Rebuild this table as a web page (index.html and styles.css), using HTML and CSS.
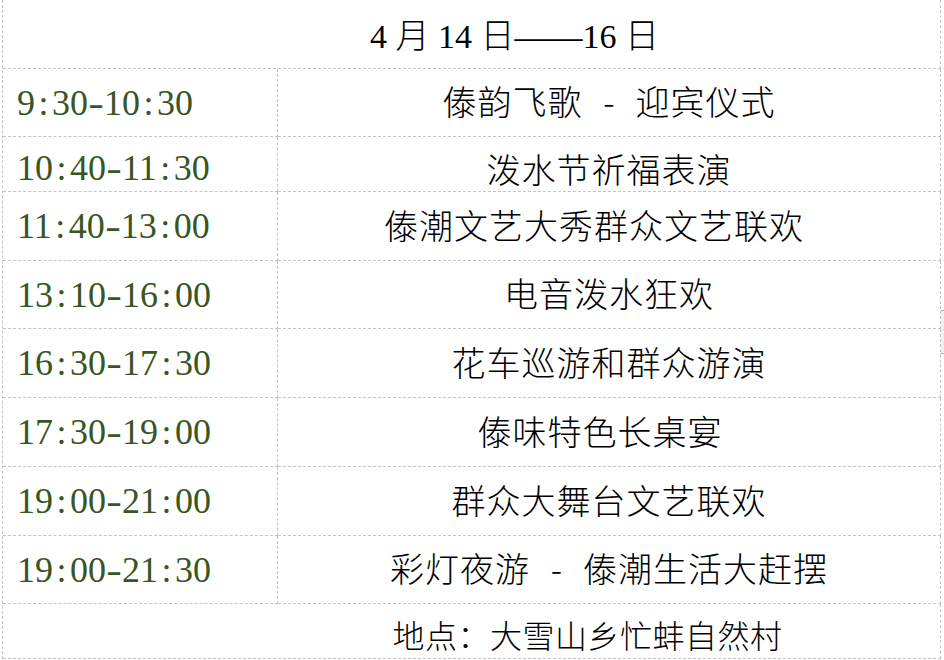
FILE: index.html
```html
<!DOCTYPE html>
<html lang="zh-CN">
<head>
<meta charset="utf-8">
<title>4月14日—16日 活动安排</title>
<link rel="stylesheet" href="styles.css">
</head>
<body>
<div class="schedule">
  <div class="cell span title">4 月 14 日——16 日</div>

  <div class="cell time">9<span class="c">:</span>30<span class="d">-</span>10<span class="c">:</span>30</div>
  <div class="cell event">傣韵飞歌<span class="sep">-</span>迎宾仪式</div>

  <div class="cell time short">10<span class="c">:</span>40<span class="d">-</span>11<span class="c">:</span>30</div>
  <div class="cell event short">泼水节祈福表演</div>

  <div class="cell time">11<span class="c">:</span>40<span class="d">-</span>13<span class="c">:</span>00</div>
  <div class="cell event shift-lg">傣潮文艺大秀群众文艺联欢</div>

  <div class="cell time">13<span class="c">:</span>10<span class="d">-</span>16<span class="c">:</span>00</div>
  <div class="cell event">电音泼水狂欢</div>

  <div class="cell time">16<span class="c">:</span>30<span class="d">-</span>17<span class="c">:</span>30</div>
  <div class="cell event">花车巡游和群众游演</div>

  <div class="cell time">17<span class="c">:</span>30<span class="d">-</span>19<span class="c">:</span>00</div>
  <div class="cell event shift-sm">傣味特色长桌宴</div>

  <div class="cell time">19<span class="c">:</span>00<span class="d">-</span>21<span class="c">:</span>00</div>
  <div class="cell event">群众大舞台文艺联欢</div>

  <div class="cell time">19<span class="c">:</span>00<span class="d">-</span>21<span class="c">:</span>30</div>
  <div class="cell event">彩灯夜游<span class="sep">-</span>傣潮生活大赶摆</div>

  <div class="cell span place">地点：大雪山乡忙蚌自然村</div>
</div>
<div class="scroll-thumb"></div>
</body>
</html>
```

FILE: styles.css
```css
html, body {
  margin: 0;
  padding: 0;
  background: #ffffff;
  overflow: hidden;
}

body {
  width: 944px;
  height: 660px;
  position: relative;
}

.schedule {
  display: grid;
  grid-template-columns: 275px 663px;
  grid-template-rows: 69px 68px 55px 69px 68px 69px 69px 69px 68px 55px;
  margin-left: 2px;
  border-left: 1px dashed #c4c4c4;
  width: 938px;
}

.cell {
  box-sizing: border-box;
  display: flex;
  align-items: center;
  border-bottom: 1px dashed #c4c4c4;
  border-right: 1px dashed #c4c4c4;
  white-space: nowrap;
}

.span {
  grid-column: 1 / span 2;
  justify-content: center;
  color: #000000;
}

.title {
  font-family: "Liberation Serif", "Noto Sans CJK SC", serif;
  font-size: 34px;
  font-weight: 300;
  padding-left: 86px;
  padding-bottom: 2px;
}

.place {
  font-family: "Noto Sans CJK SC", sans-serif;
  font-size: 32px;
  font-weight: 300;
  letter-spacing: 0.5px;
  padding-left: 232px;
  padding-top: 6px;
}

.time {
  font-family: "Liberation Serif", "Times New Roman", serif;
  font-size: 36px;
  color: #375623;
  padding-left: 14px;
}

.time .c,
.time .d {
  display: inline-block;
  width: 17px;
  text-align: center;
}

.time .d {
  width: 16px;
  transform: scaleX(1.3);
}

.event {
  justify-content: center;
  font-family: "Noto Sans CJK SC", sans-serif;
  font-size: 34px;
  font-weight: 300;
  letter-spacing: 1px;
  color: #000000;
  padding-bottom: 4px;
}

.short {
  padding-top: 8px;
}

.event.short {
  padding-bottom: 0;
}

.shift-lg {
  padding-right: 30px;
}

.shift-sm {
  padding-right: 18px;
}

.sep {
  display: inline-block;
  width: 53px;
  text-align: center;
  letter-spacing: 0;
}

.scroll-thumb {
  position: absolute;
  left: 941px;
  top: 310px;
  width: 3px;
  height: 42px;
  background: #f0f0f0;
  border-top: 1px solid #a8a8a8;
  border-bottom: 1px solid #a8a8a8;
}
```
